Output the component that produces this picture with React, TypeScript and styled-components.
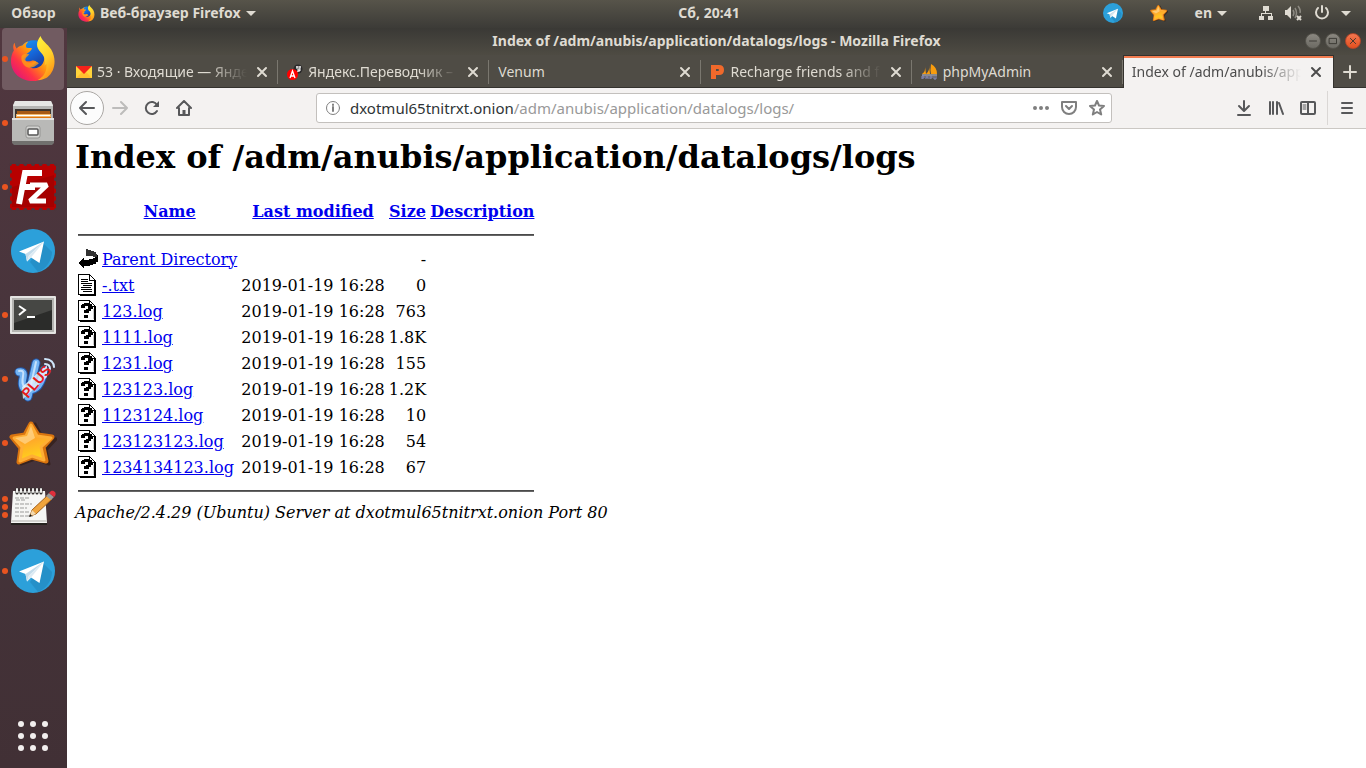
import React from "react";
import styled, { createGlobalStyle, css } from "styled-components";

const GlobalStyle = createGlobalStyle`
  * { box-sizing: border-box; }
  body { margin: 0; background: #fff; }
  button { font: inherit; color: inherit; background: none; border: 0; padding: 0; margin: 0; cursor: pointer; }
`;

const UI_FONT = `"Noto Sans", "Open Sans", sans-serif`;

/* ---------- shell ---------- */

const Desktop = styled.div`
  display: flex;
  flex-direction: column;
  min-height: 100vh;
  font-family: ${UI_FONT};
  font-size: 14px;
  line-height: 20px;
`;

const Workspace = styled.div`
  display: flex;
  flex: 1;
`;

const TopBar = styled.header`
  display: grid;
  grid-template-columns: 67px 1fr auto 1fr;
  align-items: center;
  height: 28px;
  padding: 0 15px 2px 0;
  background: linear-gradient(#57544a, #3c3b37);
  color: #dfdbd2;
  font-weight: 700;
`;

const PanelButton = styled.button`
  display: flex;
  align-items: center;
  justify-content: center;
  gap: 5px;
`;

const AppMenu = styled(PanelButton)`
  justify-self: start;
  padding-left: 11px;
`;

const Tray = styled.div`
  display: flex;
  align-items: center;
  justify-content: flex-end;
  gap: 11px;
`;

const TrayGroup = styled.div`
  display: flex;
  align-items: center;
  gap: 27px;
  margin-right: 20px;
`;

const Caret = styled.span`
  border: 5px solid transparent;
  border-top-color: #dfdbd2;
  border-bottom: 0;
`;

/* ---------- dock ---------- */

const Dock = styled.nav`
  display: flex;
  flex-direction: column;
  gap: 2px;
  width: 67px;
  flex: none;
  padding: 0 3px 1px 2px;
  background: linear-gradient(#51373f, #46343b 50%, #413035);
`;

const DockItem = styled.button<{ $active?: boolean; $last?: boolean }>`
  position: relative;
  display: flex;
  align-items: center;
  justify-content: center;
  height: 62px;
  border-radius: 4px;
  background: ${(p) => (p.$active ? "#715b61" : "transparent")};
  margin-top: ${(p) => (p.$last ? "auto" : "0")};
`;

const Dots = styled.span`
  position: absolute;
  left: 0;
  top: 0;
  bottom: 0;
  display: flex;
  flex-direction: column;
  justify-content: center;
  gap: 2px;
`;

const Dot = styled.i`
  width: 6px;
  height: 6px;
  border-radius: 50%;
  background: #e95420;
`;

/* ---------- browser window ---------- */

const BrowserWindow = styled.section`
  display: flex;
  flex-direction: column;
  flex: 1;
  min-width: 0;
`;

const TitleBar = styled.div`
  display: grid;
  grid-template-columns: 1fr auto 1fr;
  align-items: center;
  height: 27px;
  padding: 0 5px 2px 5px;
  background: linear-gradient(#3a3935, #4e4b43);
  color: #dfdbd2;
  font-weight: 700;
`;

const WindowTitle = styled.span`
  grid-column: 2;
`;

const WindowControls = styled.div`
  display: flex;
  justify-content: flex-end;
  gap: 4px;
`;

const WindowControl = styled.button<{ $close?: boolean }>`
  display: flex;
  width: 16px;
  height: 16px;
  border-radius: 50%;
  border: 1px solid ${(p) => (p.$close ? "#b4462a" : "#55534c")};
  background: ${(p) => (p.$close ? "linear-gradient(#f4764f, #e2501f)" : "linear-gradient(#8a8780, #6c6a63)")};
  color: #35332e;
`;

const TabStrip = styled.div`
  display: grid;
  grid-template-columns: repeat(6, minmax(0, 1fr)) 32px;
  height: 33px;
  background: #4f4c45;
  box-shadow: inset 0 -1px #34322e;
`;

const Tab = styled.div<{ $active?: boolean }>`
  display: flex;
  align-items: center;
  min-width: 0;
  gap: 5px;
  padding-left: 9px;
  color: #dfdbd2;
  ${(p) =>
    p.$active &&
    css`
      padding: 0 7px 0 8px;
      background: #f4f2f1;
      color: #4c4c4c;
      border: 1px solid #34322e;
      border-bottom: 0;
      box-shadow: inset 0 2px #f27c50;
    `}
`;

const TabLabel = styled.button<{ $fade?: boolean }>`
  flex: 1;
  min-width: 0;
  overflow: hidden;
  white-space: nowrap;
  text-align: left;
  ${(p) =>
    p.$fade &&
    css`
      mask-image: linear-gradient(to left, transparent, #000 40px);
    `}
`;

const TabClose = styled.button`
  display: flex;
  padding: 2px;
`;

const TabDivider = styled.i`
  flex: none;
  width: 1px;
  height: 24px;
  background: #7a776f;
`;

const NewTab = styled.button`
  display: flex;
  align-items: center;
  justify-content: center;
  color: #dfdbd2;
`;

const Toolbar = styled.div`
  display: flex;
  align-items: center;
  height: 41px;
  padding: 0 3px;
  background: #f4f2f1;
  border-bottom: 1px solid #cbc8c4;
  color: #57585a;
`;

const ToolButton = styled.button<{ $dim?: boolean }>`
  display: flex;
  align-items: center;
  justify-content: center;
  width: 32px;
  height: 32px;
  color: ${(p) => (p.$dim ? "#bdbcbb" : "inherit")};
`;

const BackButton = styled(ToolButton)`
  width: 34px;
  height: 34px;
  border: 1px solid #aaa7a4;
  border-radius: 50%;
  background: #fcfcfc;
`;

const ToolDivider = styled.i`
  width: 1px;
  height: 34px;
  margin: 0 3px;
  background: #dad7d5;
`;

const AddressBar = styled.div`
  display: flex;
  align-items: center;
  flex: 1;
  min-width: 0;
  height: 30px;
  margin: 0 116px;
  padding: 0 6px 0 8px;
  border: 1px solid #c3c0bd;
  border-radius: 3px;
  background: #fff;
  color: #7f7f7f;
  font-size: 15px;
`;

const AddressLabel = styled.label`
  margin-left: 9px;
  color: #2e3436;
`;

const AddressInput = styled.input`
  flex: 1;
  min-width: 0;
  padding: 0;
  border: 0;
  outline: 0;
  background: none;
  color: #999;
  font: inherit;
`;

const AddressActions = styled.div`
  display: flex;
  align-items: center;
  gap: 12px;

  button {
    display: flex;
  }
`;

/* ---------- directory listing ---------- */

const Page = styled.main`
  flex: 1;
  padding: 10px 8px;
  background: #fff;
  color: #000;
  font-family: "DejaVu Serif", serif;
  font-size: 16px;
  line-height: 19px;
`;

const Heading = styled.h1`
  margin: 0 0 21px;
  font-size: 32px;
  line-height: 37px;
  font-weight: 700;
`;

const Listing = styled.table`
  border-spacing: 2px;

  th, td { padding: 1px; white-space: nowrap; }
  th:first-child, td:first-child { height: 24px; }
  svg { display: block; }
  a { color: #0000ee; text-decoration: underline; }
`;

const NumberCell = styled.td`
  text-align: right;
`;

const RuleRow = styled.tr`
  && th { height: 20px; }
`;

const Rule = styled.hr`
  height: 2px;
  margin: 8px 0;
  border: 0;
  background: #666;
  border-top: 1px solid #4a4a4a;
`;

const Signature = styled.address`
  font-style: italic;
`;

/* ---------- icons ---------- */

const Firefox = ({ size, id }: { size: number; id: string }) => (
  <svg width={size} height={size} viewBox="0 0 48 48">
    <defs>
      <linearGradient id={`${id}-body`} x1="0.1" y1="0.9" x2="0.9" y2="0.2">
        <stop offset="0" stopColor="#e0147a" />
        <stop offset="0.3" stopColor="#ff3346" />
        <stop offset="0.6" stopColor="#ff9010" />
        <stop offset="1" stopColor="#ffd92e" />
      </linearGradient>
      <linearGradient id={`${id}-globe`} x1="0" y1="0" x2="0.6" y2="1">
        <stop offset="0" stopColor="#1aa0f5" />
        <stop offset="0.5" stopColor="#1565d8" />
        <stop offset="1" stopColor="#1b2f8a" />
      </linearGradient>
      <linearGradient id={`${id}-flame`} x1="0.3" y1="0" x2="0.7" y2="1">
        <stop offset="0" stopColor="#ffee3a" />
        <stop offset="0.5" stopColor="#ffd02b" />
        <stop offset="1" stopColor="#ff8a12" />
      </linearGradient>
    </defs>
    <circle cx="25" cy="22" r="17.5" fill={`url(#${id}-globe)`} />
    <path
      d="M5 7c0 3 1 5 2 6 2-2 4-3 6-3 1-2 4-4 6-4-2 2-3 4-2 6 2 1 5 0 6 1-1 3-4 4-6 6 0 3-2 3-3 5 1 2 4 3 8 2 3-1 5 0 6 2-3 1-4 4-8 4 4 3 11 2 14-3 3-5 2-9 1-12 3 2 3 4 3 6 2-5 1-9 0-12 9 10 9 20 4 27-4 6-11 9-18 9C11 47 1 38 1 26c0-4 1-8 3-11-1-3-1-6 1-8z"
      fill={`url(#${id}-body)`}
    />
    <path
      d="M32 0c1 5 7 8 11 14 6 10 4 23-4 29-3 2-8 3-10 3 6-3 10-9 9-17-1 1-2 2-2 2 1-6 0-10-4-14-6-6-4-12 0-17z"
      fill={`url(#${id}-flame)`}
    />
    <path d="M12 21c2-3 5-2 8-2-1 2-4 3-4 6 1 3 5 3 8 2 3-1 5 0 6 2-3 1-4 4-9 4-5 0-10-5-9-12z" fill="#ff9a17" opacity=".8" />
  </svg>
);

const Telegram = ({ size }: { size: number }) => (
  <svg width={size} height={size} viewBox="0 0 44 44">
    <circle cx="22" cy="22" r="22" fill="#2ca0da" />
    <path d="M19 33L32 14l9 9a22 22 0 0 1-14 20z" fill="#2186bd" opacity=".6" />
    <path d="M8 22.500L33 12.500 28.500 34 20 28.500 16 32.500 14.500 25z" fill="#fff" />
    <path d="M14.500 25L33 12.500 18 26.500 16 32.500z" fill="#c3dbea" />
    <path d="M18 26.500L33 12.500 20 28.500 16 32.500z" fill="#dceaf3" />
  </svg>
);

const Star = ({ size, id }: { size: number; id: string }) => (
  <svg width={size} height={size} viewBox="0 0 48 48">
    <defs>
      <linearGradient id={id} x1="0" y1="0" x2="0.3" y2="1">
        <stop offset="0" stopColor="#ffb95a" />
        <stop offset="0.5" stopColor="#ffa82a" />
        <stop offset="1" stopColor="#ffd21c" />
      </linearGradient>
    </defs>
    <path d="M26 5l7 13 14 2-10 11 3 14-14-5-14 5z" fill="#2a1408" stroke="#2a1408" strokeWidth="3" strokeLinejoin="round" opacity=".5" />
    <path d="M22 5l7 11 14 2-9 10 3 14-14-4-13 5 2-14L3 18l13-2z" fill={`url(#${id})`} stroke="#d9740f" strokeWidth="5" strokeLinejoin="round" />
    <path d="M22 6l6 11 14 2-10 9 3 13-12-4-12 5 2-14L5 19l12-2z" fill={`url(#${id})`} stroke="#ffae35" strokeWidth="3" strokeLinejoin="round" />
    <path d="M22 7l4 12-10 6L6 19l12-2z" fill="#ffe0a0" opacity=".6" />
  </svg>
);

const Cabinet = () => (
  <svg width="44" height="46" viewBox="0 0 44 46">
    <path d="M4 1h36l2 4v38H2V5z" fill="#b5b5b3" />
    <path d="M4 1h36l2 5H2z" fill="#e6e6e4" />
    <rect x="4" y="9" width="36" height="11" fill="#3d352f" />
    <rect x="6" y="11" width="33" height="3" fill="#a85a14" />
    <rect x="5" y="14" width="35" height="4" fill="#f2b86c" />
    <rect x="6" y="15" width="33" height="1" fill="#fff" />
    <rect x="5" y="17" width="35" height="2" fill="#e2770f" />
    <path d="M1 18h42v25H1z" fill="#b9b9b7" />
    <path d="M1 18h42v2H1z" fill="#e2e2e0" />
    <path d="M1 41h42v2l-2 2H3l-2-2z" fill="#71706e" />
    <rect x="15" y="26" width="14" height="12" rx="2" fill="#d4d4d2" stroke="#959593" />
    <rect x="17" y="29" width="10" height="6" rx="1" fill="#fff" stroke="#555" strokeWidth="1.500" />
  </svg>
);

const FileZilla = () => (
  <svg width="48" height="48" viewBox="0 0 48 48">
    <rect x="1" y="1" width="46" height="46" fill="#b80000" />
    <rect x="1" y="1" width="46" height="46" fill="none" stroke="#4b353c" strokeWidth="4" strokeDasharray="0 7.667" strokeLinecap="round" />
    <path d="M3 24l42-12v32H3z" fill="#8d0000" opacity=".4" />
    <g fill="none" stroke="#fff">
      <path d="M10 41l6-31h17M13 24h13" strokeWidth="6" />
      <path d="M21 22h17L21 38h16" strokeWidth="5" strokeLinejoin="bevel" />
    </g>
  </svg>
);

const Terminal = () => (
  <svg width="46" height="38" viewBox="0 0 46 38">
    <rect x="0" y="0" width="46" height="38" rx="1" fill="#e4e4e2" />
    <rect x="2" y="2" width="42" height="34" fill="#b4b4b1" />
    <rect x="4" y="4" width="38" height="30" fill="#2b2c2a" />
    <path d="M4 4h38v10L4 27z" fill="#464744" />
    <path d="M9 10l6 4-6 5" fill="none" stroke="#fff" strokeWidth="2" />
    <path d="M17 21h8" stroke="#fff" strokeWidth="2" />
  </svg>
);

const PsiPlus = () => (
  <svg width="44" height="46" viewBox="0 0 44 46">
    <g fill="none" strokeLinecap="round" strokeLinejoin="round">
      <path d="M8 16c4-1 5 1 4 6-2 8 0 12 6 12 8 0 13-8 15-20M25 7l-8 34" stroke="#2257a8" strokeWidth="9" />
      <path d="M8 16c4-1 5 1 4 6-2 8 0 12 6 12 8 0 13-8 15-20M25 7l-8 34" stroke="#74b4f3" strokeWidth="7" />
      <path d="M8 15c4-1 5 1 4 5-1 6-1 9 2 11M25 6l-6 27" stroke="#c4e1fc" strokeWidth="2" />
      <path d="M34 8c3 0 5 2 5 5M34 3c6 0 9 4 9 8" stroke="#cfe6fb" strokeWidth="2" />
    </g>
    <path d="M11 31L36 9v12L12 43z" fill="#e9f3fd" opacity=".8" />
    <text x="17" y="43" transform="rotate(-50 17 43)" fill="#e51b1b" fontFamily="Liberation Sans" fontWeight="700" fontSize="14">
      PLUS
    </text>
  </svg>
);

const Notepad = () => (
  <svg width="48" height="40" viewBox="0 0 48 40">
    <path d="M4 4h32l2 32H2z" fill="#f6f6f4" />
    <path d="M2 36h36v2H2z" fill="#26221f" />
    <path d="M2 33h36v2H2z" fill="#d4d3d0" />
    <path d="M8 2v4M12 2v4M16 2v4M20 2v4M24 2v4M28 2v4M32 2v4" stroke="#33302e" strokeWidth="3" strokeLinecap="round" />
    <path d="M8 2v3M12 2v3M16 2v3M20 2v3M24 2v3M28 2v3M32 2v3" stroke="#f0f0ee" strokeWidth="2" strokeLinecap="round" />
    <path d="M6 11h14M7 13h9M6 17h17M6 21h12M6 25h14M6 29h18" stroke="#9b9b99" strokeDasharray="4 1" />
    <path d="M21 29l2-6L39 8l4 4-16 15z" fill="#f0a43c" stroke="#a4611a" />
    <path d="M21 29l2-6 4 4z" fill="#f3d9ae" />
    <path d="M20 30l1-3 2 2z" fill="#111" />
    <path d="M37 9l3-3 5 4-3 3z" fill="#9c9c9a" />
    <path d="M40 6l2-2c3-1 6 2 4 5l-1 1z" fill="#e0303c" />
  </svg>
);

const AppGrid = () => (
  <svg width="32" height="32" viewBox="0 0 32 32" fill="#f2efee">
    {[4, 16, 28].map((y) => [4, 16, 28].map((x) => <circle key={`${x}-${y}`} cx={x} cy={y} r="3" />))}
  </svg>
);

const Line = ({ size = 16, width = 2, children }: { size?: number; width?: number; children: React.ReactNode }) => (
  <svg width={size} height={size} viewBox="0 0 16 16" fill="none" stroke="currentColor" strokeWidth={width} strokeLinecap="round" strokeLinejoin="round">
    {children}
  </svg>
);

const Network = () => (
  <svg width="16" height="16" viewBox="0 0 16 16" fill="#dfdbd2">
    <path d="M5 1h6v5H5zM7 6h1v3H7zM3 8h11v1H3zM3 8h1v3H3zM13 8h1v3h-1zM1 11h5v4H1zM10 11h5v4h-5z" />
  </svg>
);

const Volume = () => (
  <svg width="18" height="16" viewBox="0 0 18 16" fill="#dfdbd2">
    <path d="M0 5h2l4-4v13l-4-4H0z" />
    <path d="M8 5q2 3 0 6M10 3q3 5 0 10M13 1q3 4 2 7" fill="none" stroke="#8d8a82" strokeWidth="1.500" />
    <path d="M12 11l4 4M16 11l-4 4" stroke="#dfdbd2" strokeWidth="2" />
  </svg>
);

const Power = () => (
  <svg width="16" height="16" viewBox="0 0 16 16" fill="none" stroke="#dfdbd2" strokeWidth="2" strokeLinecap="round">
    <path d="M4 3a6 6 0 1 0 8 0M8 1v6" />
  </svg>
);

const MailIcon = () => (
  <svg width="16" height="12" viewBox="0 0 16 12">
    <path d="M0 0h16v12H0z" fill="#ffd43b" />
    <path d="M0 12l6-6h4l6 6z" fill="#ffbf2e" />
    <path d="M0 0h16L8 8z" fill="#f5221b" />
  </svg>
);

const TranslateIcon = () => (
  <svg width="16" height="16" viewBox="0 0 16 16">
    <circle cx="11" cy="5" r="4.500" fill="#2b2a2b" />
    <path d="M9 3h5M10 2v3M13 2v3M10 6h4M12 4v4M10 8l3-2" stroke="#fff" fill="none" />
    <circle cx="5.500" cy="10.500" r="5.500" fill="#f00" />
    <path d="M3 14l2.500-7 2.500 7M4 12h3" stroke="#fff" fill="none" strokeWidth="1.300" />
  </svg>
);

const RechargeIcon = () => (
  <svg width="16" height="16" viewBox="0 0 16 16">
    <path fillRule="evenodd" d="M1 1h8q5 0 5 5t-5 5H6v4H1zM6 5v2h2q1 0 1-1t-1-1z" fill="#f0692b" />
  </svg>
);

const PhpMyAdminIcon = () => (
  <svg width="17" height="16" viewBox="0 0 17 16">
    <path d="M4 2q1 5-3 8h4zM8 1q1 6-3 9h4zM10 0q-1 6 0 10h6q0-7-6-10z" fill="#f89c0e" />
    <path d="M1 11h15" stroke="#c9c9d6" />
    <path d="M1 15v-3h2v2H1M5 12v3M7 12v3M5 13h2M9 15v-3h2v2H9M13 12v3h2v-3" stroke="#8b8fc0" fill="none" />
  </svg>
);

const CloseIcon = () => (
  <Line>
    <path d="M4 4l8 8M12 4l-8 8" />
  </Line>
);

const PageOutline = () => (
  <>
    <path d="M0 0h12v1h1v1h1v1h1v1h1v1h1v1h1v16H2v-1H0z" fill="#000" />
    <path d="M1 1h10v6h5v13H1z" fill="#fff" />
    <path d="M12 2h1v1h1v1h1v1h1v1h-4z" fill="#fff" />
  </>
);

const FileIcon = ({ kind }: { kind: string }) => (
  <svg width="20" height="22" viewBox="0 0 20 22" shapeRendering="crispEdges">
    {kind === "back" && (
      <>
        <path d="M8 1h2v1h3v1h3v1h2v2h1v3h-4V8H8z" fill="#333" />
        <path d="M0 15l6-6v3h5v-1h4v-1h2V9h2V7h1v7h-2v2h-3v1h-3v1H6v3z" fill="#000" />
      </>
    )}
    {kind === "text" && (
      <>
        <PageOutline />
        <path d="M3 5h7v1H3zM3 7h7v1H3zM3 9h11v1H3zM5 11h9v1H5zM3 13h10v1H3zM3 15h11v1H3zM5 17h9v1H5z" fill="#000" />
      </>
    )}
    {kind === "unknown" && (
      <>
        <PageOutline />
        <path d="M4 4h2V3h6v1h2v2h1v3h-2v2h-2v2H6v-3h2V9h2V6H7v2H3V5h1zM6 15h4v3H6z" fill="#000" />
        <path d="M15 9h1v10h-1z" fill="#ccc" />
      </>
    )}
  </svg>
);

/* ---------- data ---------- */

const dock = [
  { name: "Firefox", icon: <Firefox size={46} id="dock-firefox" />, dots: 1, active: true },
  { name: "Files", icon: <Cabinet />, dots: 1 },
  { name: "FileZilla", icon: <FileZilla />, dots: 1 },
  { name: "Telegram", icon: <Telegram size={44} />, dots: 0 },
  { name: "Terminal", icon: <Terminal />, dots: 1 },
  { name: "Psi+", icon: <PsiPlus />, dots: 1 },
  { name: "Star", icon: <Star size={48} id="dock-star" />, dots: 1 },
  { name: "Text editor", icon: <Notepad />, dots: 3 },
  { name: "Telegram 2", icon: <Telegram size={44} />, dots: 1 },
];

const tabs = [
  { label: "53 · Входящие — Янде", icon: <MailIcon />, fade: true },
  { label: "Яндекс.Переводчик –", icon: <TranslateIcon />, fade: true },
  { label: "Venum" },
  { label: "Recharge friends and f", icon: <RechargeIcon />, fade: true },
  { label: "phpMyAdmin", icon: <PhpMyAdminIcon /> },
  { label: "Index of /adm/anubis/app", fade: true, active: true },
];

const files = [
  { kind: "back", name: "Parent Directory", date: "", size: "-" },
  { kind: "text", name: "-.txt", date: "2019-01-19 16:28", size: "0" },
  { kind: "unknown", name: "123.log", date: "2019-01-19 16:28", size: "763" },
  { kind: "unknown", name: "1111.log", date: "2019-01-19 16:28", size: "1.8K" },
  { kind: "unknown", name: "1231.log", date: "2019-01-19 16:28", size: "155" },
  { kind: "unknown", name: "123123.log", date: "2019-01-19 16:28", size: "1.2K" },
  { kind: "unknown", name: "1123124.log", date: "2019-01-19 16:28", size: "10" },
  { kind: "unknown", name: "123123123.log", date: "2019-01-19 16:28", size: "54" },
  { kind: "unknown", name: "1234134123.log", date: "2019-01-19 16:28", size: "67" },
];

export default function App() {
  return (
    <Desktop>
      <GlobalStyle />
      <TopBar>
        <PanelButton>Обзор</PanelButton>
        <AppMenu>
          <Firefox size={17} id="menu-firefox" />
          Веб-браузер Firefox
          <Caret />
        </AppMenu>
        <PanelButton>Сб, 20:41</PanelButton>
        <Tray>
          <TrayGroup>
            <Telegram size={20} />
            <Star size={18} id="tray-star" />
            <PanelButton>
              en
              <Caret />
            </PanelButton>
          </TrayGroup>
          <Network />
          <Volume />
          <Power />
          <Caret />
        </Tray>
      </TopBar>
      <Workspace>
        <Dock>
          {dock.map((item) => (
            <DockItem key={item.name} $active={item.active} aria-label={item.name}>
              <Dots>
                {Array.from({ length: item.dots }, (_, i) => (
                  <Dot key={i} />
                ))}
              </Dots>
              {item.icon}
            </DockItem>
          ))}
          <DockItem $last aria-label="Show applications">
            <AppGrid />
          </DockItem>
        </Dock>
        <BrowserWindow>
          <TitleBar>
            <WindowTitle>Index of /adm/anubis/application/datalogs/logs - Mozilla Firefox</WindowTitle>
            <WindowControls>
              <WindowControl aria-label="Minimize">
                <Line size={14} width={1}><path d="M4 8h8" /></Line>
              </WindowControl>
              <WindowControl aria-label="Maximize">
                <Line size={14} width={1}><path d="M4 5h8v6H4z" /></Line>
              </WindowControl>
              <WindowControl $close aria-label="Close">
                <Line size={14} width={1}><path d="M5 5l6 6M11 5l-6 6" /></Line>
              </WindowControl>
            </WindowControls>
          </TitleBar>
          <TabStrip>
            {tabs.map((tab) => (
              <Tab key={tab.label} $active={tab.active}>
                {tab.icon}
                <TabLabel $fade={tab.fade}>{tab.label}</TabLabel>
                <TabClose aria-label="Close tab">
                  <CloseIcon />
                </TabClose>
                {!tab.active && <TabDivider />}
              </Tab>
            ))}
            <NewTab aria-label="New tab">
              <Line><path d="M8 2v12M2 8h12" /></Line>
            </NewTab>
          </TabStrip>
          <Toolbar>
            <BackButton aria-label="Back">
              <Line><path d="M1 8h14M7 2L1 8l6 6" /></Line>
            </BackButton>
            <ToolButton $dim aria-label="Forward">
              <Line><path d="M1 8h14M9 2l6 6-6 6" /></Line>
            </ToolButton>
            <ToolButton aria-label="Reload">
              <Line><path d="M13 11a6 6 0 1 1 0-6" /><path d="M15 1v6H9z" fill="currentColor" stroke="none" /></Line>
            </ToolButton>
            <ToolButton aria-label="Home">
              <Line><path d="M1 8l7-7 7 7M3 8v7h10V8" /><path d="M8 14v-4" strokeWidth="3" strokeLinecap="butt" /></Line>
            </ToolButton>
            <AddressBar>
              <Line width={1}><circle cx="8" cy="8" r="6.500" /><path d="M8 7v4M8 4.500v.5" strokeWidth="2" /></Line>
              <AddressLabel htmlFor="address">dxotmul65tnitrxt.onion</AddressLabel>
              <AddressInput id="address" defaultValue="/adm/anubis/application/datalogs/logs/" />
              <AddressActions>
                <button aria-label="Page actions">
                  <Line width={4}><path d="M2 8h.01M8 8h.01M14 8h.01" /></Line>
                </button>
                <button aria-label="Save to Pocket">
                  <Line><path d="M1 2h14v5a7 7 0 0 1-14 0zM5 6l3 3 3-3" /></Line>
                </button>
                <button aria-label="Bookmark">
                  <Line><path d="M8 1l2 4.500 5 .5-4 3.500 1.200 5L8 12l-4.200 2.500L5 9.500 1 6l5-.5z" /></Line>
                </button>
              </AddressActions>
            </AddressBar>
            <ToolButton aria-label="Downloads">
              <Line><path d="M8 1v9M3 6l5 5 5-5M2 15h12" /></Line>
            </ToolButton>
            <ToolButton aria-label="Library">
              <Line><path d="M2 2v12M5 2v12M9 2v12M11 3l4 11" /></Line>
            </ToolButton>
            <ToolButton aria-label="Sidebar">
              <Line><path d="M2 2h12q1 0 1 1v10q0 1-1 1H2q-1 0-1-1V3q0-1 1-1zM8 2v12" /><path d="M3 5h3M3 7h3M3 9h3" strokeWidth="1" /></Line>
            </ToolButton>
            <ToolDivider />
            <ToolButton aria-label="Menu">
              <Line><path d="M3 3h10M3 8h10M3 13h10" /></Line>
            </ToolButton>
          </Toolbar>
          <Page>
            <Heading>Index of /adm/anubis/application/datalogs/logs</Heading>
            <Listing>
              <thead>
                <tr>
                  <th aria-label="Type" />
                  <th><a href="#name">Name</a></th>
                  <th><a href="#modified">Last modified</a></th>
                  <th><a href="#size">Size</a></th>
                  <th><a href="#description">Description</a></th>
                </tr>
                <RuleRow>
                  <th colSpan={5}><Rule /></th>
                </RuleRow>
              </thead>
              <tbody>
                {files.map((file) => (
                  <tr key={file.name}>
                    <td><FileIcon kind={file.kind} /></td>
                    <td><a href={`#${file.name}`}>{file.name}</a></td>
                    <NumberCell>{file.date}</NumberCell>
                    <NumberCell>{file.size}</NumberCell>
                    <td />
                  </tr>
                ))}
              </tbody>
              <tfoot>
                <RuleRow>
                  <th colSpan={5}><Rule /></th>
                </RuleRow>
              </tfoot>
            </Listing>
            <Signature>Apache/2.4.29 (Ubuntu) Server at dxotmul65tnitrxt.onion Port 80</Signature>
          </Page>
        </BrowserWindow>
      </Workspace>
    </Desktop>
  );
}
